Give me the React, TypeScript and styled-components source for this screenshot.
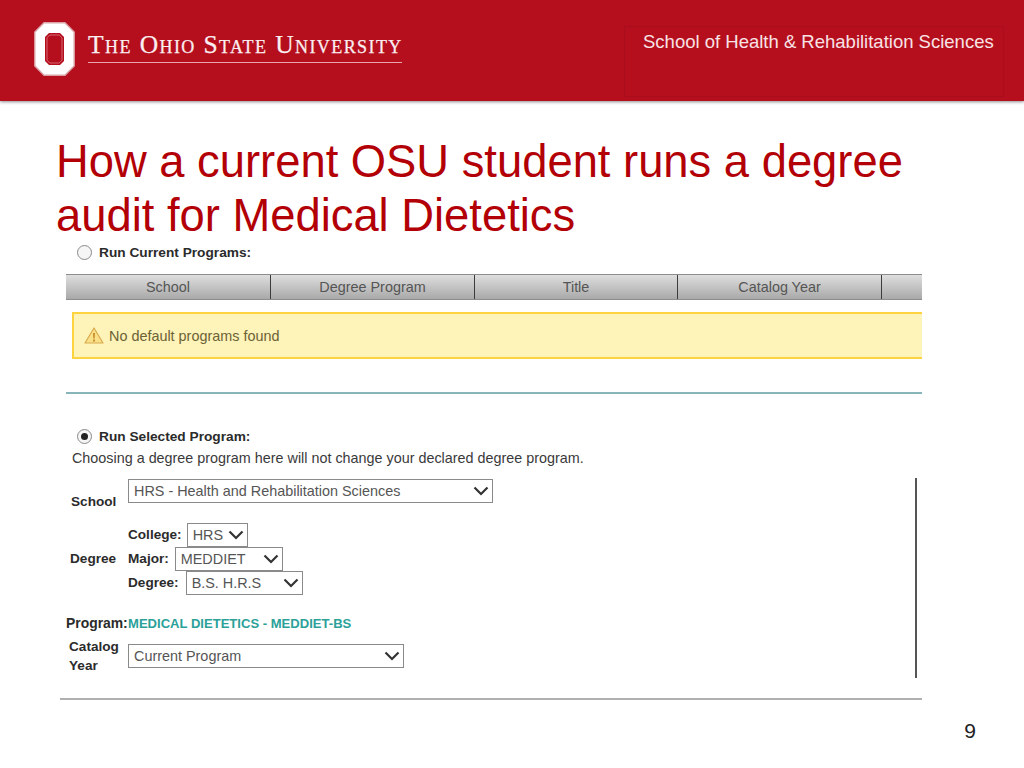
import React from "react";
import styled, { createGlobalStyle } from "styled-components";

const Global = createGlobalStyle`
  html, body { margin: 0; padding: 0; background: #fff; }
  body { font-family: "Liberation Sans", Arial, sans-serif; }
`;

const Page = styled.div`
  width: 1024px;
  height: 768px;
  overflow: hidden;
  background: #fff;
`;

const Banner = styled.header`
  height: 101px;
  background: #b50f1e;
  box-shadow: 0 1px 3px rgba(0, 0, 0, 0.45);
  display: flex;
  justify-content: space-between;
  padding: 22px 20px 4px 34px;
  box-sizing: border-box;
`;

const Brand = styled.div`
  display: flex;
  align-items: flex-start;
  gap: 13px;
`;

const Wordmark = styled.div`
  width: 314px;
  height: 32px;
  margin-top: 8px;
  border-bottom: 1px solid #e9a6ab;
  font-family: "Liberation Serif", serif;
  font-variant: small-caps;
  font-size: 25.5px;
  line-height: 30px;
  letter-spacing: 1.42px;
  color: #fbeef0;
  -webkit-text-stroke: 0.25px #fbeef0;
  white-space: nowrap;
`;

const SchoolBox = styled.div`
  width: 380px;
  height: 71px;
  margin-top: 4px;
  box-sizing: border-box;
  border: 1px solid #aa0d1b;
  padding: 4px 0 0 18px;
  color: #f8e3e5;
  font-size: 18.5px;
  line-height: 21px;
  white-space: nowrap;
`;

const Title = styled.h1`
  margin: 34px 0 0 56px;
  font-weight: 400;
  font-size: 45.35px;
  line-height: 54px;
  color: #b30006;
  white-space: nowrap;
`;

const Capture = styled.section`
  position: relative;
  width: 856px;
  margin: 0 0 0 66px;
  font-size: 14.4px;
  color: #333;
`;

const RadioRow = styled.div<{ $top: number }>`
  display: flex;
  align-items: center;
  gap: 7px;
  height: 18px;
  margin-top: ${(p) => p.$top}px;
  padding-left: 11px;
  font-weight: 700;
  font-size: 13.7px;
  color: #2b2b2b;
`;

const Radio = styled.span<{ $on?: boolean }>`
  width: 15px;
  height: 15px;
  box-sizing: border-box;
  border: 1px solid #8a8a8a;
  border-radius: 50%;
  background: #f6f6f6;
  display: flex;
  align-items: center;
  justify-content: center;
  &::after {
    content: "";
    width: 7px;
    height: 7px;
    border-radius: 50%;
    background: ${(p) => (p.$on ? "#222" : "transparent")};
  }
`;

const TableHead = styled.div`
  display: grid;
  grid-template-columns: 205px 204px 203px 204px 40px;
  height: 26px;
  margin-top: 13px;
  box-sizing: border-box;
  border-top: 1px solid #8d8d8d;
  border-bottom: 1px solid #8d8d8d;
  background: linear-gradient(#dedede, #a9a9a9);
`;

const HeadCell = styled.div`
  display: flex;
  align-items: center;
  justify-content: center;
  border-right: 1px solid #3c3c3c;
  color: #555;
  font-size: 14.4px;
  &:last-child { border-right: 0; }
`;

const Alert = styled.div`
  display: flex;
  align-items: center;
  gap: 5px;
  height: 47px;
  margin: 12px 0 0 6px;
  padding-left: 10px;
  box-sizing: border-box;
  border: 2px solid #fdd33f;
  border-right: 0;
  background: #fef3b8;
  color: #6b6236;
  font-size: 14.4px;
`;

const TealRule = styled.div`
  height: 2px;
  margin-top: 33px;
  background: #88b5ba;
`;

const Note = styled.p`
  margin: 4px 0 0 6px;
  font-size: 14.36px;
  line-height: 18px;
  color: #3a3a3a;
  white-space: nowrap;
`;

const Label = styled.span`
  font-weight: 700;
  font-size: 13.6px;
  color: #2b2b2b;
  white-space: nowrap;
`;

const SchoolRow = styled.div`
  display: grid;
  grid-template-columns: 62px auto;
  margin-top: 12px;
  height: 28px;
  ${Label} { padding: 14px 0 0 5px; line-height: 18px; }
`;

const DegreeRow = styled.div`
  display: flex;
  align-items: center;
  margin-top: 16px;
`;

const DegreeLabel = styled(Label)`
  width: 62px;
  padding-left: 4px;
  box-sizing: border-box;
`;

const Stack = styled.div`
  display: flex;
  flex-direction: column;
  gap: 1px;
`;

const StackRow = styled.div<{ $gap: number }>`
  display: flex;
  align-items: center;
  height: 23px;
  gap: ${(p) => p.$gap}px;
`;

const Field = styled.div<{ $w: number }>`
  width: ${(p) => p.$w}px;
  height: 24px;
  box-sizing: border-box;
  border: 1px solid #8a8a8a;
  background: #fff;
  display: flex;
  align-items: center;
  justify-content: space-between;
  padding: 0 3px 0 5px;
  color: #555;
  font-size: 14.4px;
  white-space: nowrap;
`;

const ProgramRow = styled.div`
  display: flex;
  align-items: center;
  height: 18px;
  margin-top: 20px;
`;

const ProgramLabel = styled(Label)`
  width: 62px;
  font-size: 13.9px;
`;

const ProgramName = styled.span`
  color: #2ba199;
  font-size: 13.07px;
  font-weight: 700;
  white-space: nowrap;
`;

const CatalogRow = styled.div`
  display: flex;
  margin-top: 5px;
  height: 42px;
`;

const CatalogLabel = styled(Label)`
  width: 62px;
  padding: 0 0 0 3px;
  box-sizing: border-box;
  line-height: 19px;
  white-space: normal;
`;

const CatalogField = styled.div`
  margin-top: 7px;
`;

const VerticalBar = styled.div`
  position: absolute;
  left: 849px;
  top: 235px;
  width: 2px;
  height: 200px;
  background: #555;
`;

const BottomRule = styled.div`
  width: 862px;
  height: 2px;
  margin: 19px 0 0 60px;
  background: #b0b0b0;
`;

const PageNumber = styled.div`
  margin: 19px 48px 0 0;
  text-align: right;
  font-size: 21px;
  line-height: 24px;
  color: #222;
`;

const Chevron = () => (
  <svg width="16" height="10" viewBox="0 0 16 10" fill="none">
    <path d="M1.5 1.5 L8 8 L14.5 1.5" stroke="#333" strokeWidth="2.2" />
  </svg>
);

const Warning = () => (
  <svg width="20" height="17" viewBox="0 0 20 17">
    <path d="M10 1 L19 16 L1 16 Z" fill="#fbe08a" stroke="#d9a94e" strokeWidth="1.2" strokeLinejoin="round" />
    <path d="M9 6 h2 l-.3 5.5 h-1.4 Z M9 12.4 h2 v2 h-2 Z" fill="#c58f2a" />
  </svg>
);

const OsuLogo = () => (
  <svg width="41" height="54" viewBox="0 0 41 54">
    <path d="M10 .8 H31 L40.2 10 V44 L31 53.2 H10 L.8 44 V10 Z" fill="#fff" stroke="#d9a2a6" strokeWidth="1.4" />
    <path d="M15 11 H26 L30 15 V39 L26 43 H15 L11 39 V15 Z" fill="#b50f1e" />
    <path d="M15.8 13 H25.2 L28 15.8 V38.2 L25.2 41 H15.8 L13 38.2 V15.8 Z" fill="#b50f1e" stroke="#e08d94" strokeWidth="0.7" />
  </svg>
);

const Select = ({ w, value }: { w: number; value: string }) => (
  <Field $w={w}>
    <span>{value}</span>
    <Chevron />
  </Field>
);

const columns = ["School", "Degree Program", "Title", "Catalog Year", ""];

export default function App() {
  return (
    <Page>
      <Global />
      <Banner>
        <Brand>
          <OsuLogo />
          <Wordmark>The Ohio State University</Wordmark>
        </Brand>
        <SchoolBox>School of Health &amp; Rehabilitation Sciences</SchoolBox>
      </Banner>
      <Title>
        How a current OSU student runs a degree
        <br />
        audit for Medical Dietetics
      </Title>
      <Capture>
        <VerticalBar />
        <RadioRow $top={0}>
          <Radio />
          Run Current Programs:
        </RadioRow>
        <TableHead>
          {columns.map((c, i) => (
            <HeadCell key={i}>{c}</HeadCell>
          ))}
        </TableHead>
        <Alert>
          <Warning />
          No default programs found
        </Alert>
        <TealRule />
        <RadioRow $top={33}>
          <Radio $on />
          Run Selected Program:
        </RadioRow>
        <Note>Choosing a degree program here will not change your declared degree program.</Note>
        <SchoolRow>
          <Label>School</Label>
          <Select w={365} value="HRS - Health and Rehabilitation Sciences" />
        </SchoolRow>
        <DegreeRow>
          <DegreeLabel>Degree</DegreeLabel>
          <Stack>
            <StackRow $gap={5}>
              <Label>College:</Label>
              <Select w={61} value="HRS" />
            </StackRow>
            <StackRow $gap={6}>
              <Label>Major:</Label>
              <Select w={108} value="MEDDIET" />
            </StackRow>
            <StackRow $gap={7}>
              <Label>Degree:</Label>
              <Select w={117} value="B.S. H.R.S" />
            </StackRow>
          </Stack>
        </DegreeRow>
        <ProgramRow>
          <ProgramLabel>Program:</ProgramLabel>
          <ProgramName>MEDICAL DIETETICS - MEDDIET-BS</ProgramName>
        </ProgramRow>
        <CatalogRow>
          <CatalogLabel>Catalog Year</CatalogLabel>
          <CatalogField>
            <Select w={276} value="Current Program" />
          </CatalogField>
        </CatalogRow>
      </Capture>
      <BottomRule />
      <PageNumber>9</PageNumber>
    </Page>
  );
}
